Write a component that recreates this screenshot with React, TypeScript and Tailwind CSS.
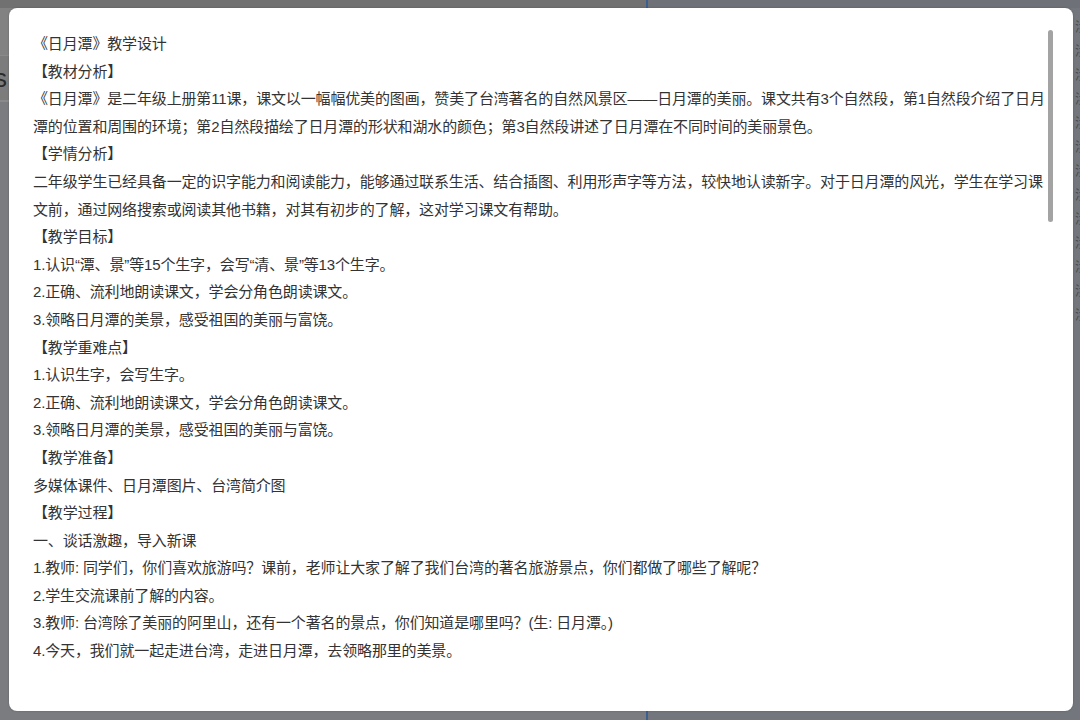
import React from "react";

const lines: string[] = [
  "《日月潭》教学设计",
  "【教材分析】",
  "《日月潭》是二年级上册第11课，课文以一幅幅优美的图画，赞美了台湾著名的自然风景区——日月潭的美丽。课文共有3个自然段，第1自然段介绍了日月潭的位置和周围的环境；第2自然段描绘了日月潭的形状和湖水的颜色；第3自然段讲述了日月潭在不同时间的美丽景色。",
  "【学情分析】",
  "二年级学生已经具备一定的识字能力和阅读能力，能够通过联系生活、结合插图、利用形声字等方法，较快地认读新字。对于日月潭的风光，学生在学习课文前，通过网络搜索或阅读其他书籍，对其有初步的了解，这对学习课文有帮助。",
  "【教学目标】",
  "1.认识“潭、景”等15个生字，会写“清、景”等13个生字。",
  "2.正确、流利地朗读课文，学会分角色朗读课文。",
  "3.领略日月潭的美景，感受祖国的美丽与富饶。",
  "【教学重难点】",
  "1.认识生字，会写生字。",
  "2.正确、流利地朗读课文，学会分角色朗读课文。",
  "3.领略日月潭的美景，感受祖国的美丽与富饶。",
  "【教学准备】",
  "多媒体课件、日月潭图片、台湾简介图",
  "【教学过程】",
  "一、谈话激趣，导入新课",
  "1.教师: 同学们，你们喜欢旅游吗？课前，老师让大家了解了我们台湾的著名旅游景点，你们都做了哪些了解呢？",
  "2.学生交流课前了解的内容。",
  "3.教师: 台湾除了美丽的阿里山，还有一个著名的景点，你们知道是哪里吗？(生: 日月潭。)",
  "4.今天，我们就一起走进台湾，走进日月潭，去领略那里的美景。",
];

const Backdrop = () => (
  <div className="absolute inset-0 flex">
    <div className="w-[646px] bg-[#7e7e7e] flex flex-col">
      <div className="h-[8px] bg-[#717171]" />
      <div className="h-[47px] bg-[#828282]" />
      <div className="h-[45px] bg-[#7c7c7c] border-t border-[#8a8a8a] text-[26px] leading-[45px] text-[#2a2a2a] font-['Liberation_Sans',sans-serif]">
        <span className="-ml-[6px]">s</span>
      </div>
      <div className="h-[2px] bg-[#8a8a8a]" />
      <div className="flex-1 bg-[#7b7c7f]" />
    </div>
    <div className="w-[2px] bg-[#3b5f8f]" />
    <div className="flex-1 bg-[#73777d] flex flex-col">
      <div className="h-[8px] bg-[#6e7278]" />
      <div className="flex-1 flex flex-col items-end pt-[10px] gap-[8px] text-[13px] leading-[16px] text-[#4a4a4a] font-['Noto_Sans_CJK_SC',sans-serif]">
        {Array.from({ length: 13 }).map((_, i) => (
          <span key={i} className="-mr-[8px]">涉</span>
        ))}
      </div>
    </div>
  </div>
);

export default function App() {
  return (
    <div className="relative w-[1080px] h-[720px] overflow-hidden">
      <Backdrop />
      <div className="absolute left-[9px] top-[8px] w-[1064px] h-[703px] bg-white rounded-[8px] shadow-[0_0_2px_rgba(0,0,0,0.25)] overflow-hidden">
        <div className="h-full overflow-hidden pl-[24px] pr-[25px] pt-[22px] text-[15px] leading-[27.6px] tracking-[-0.15px] text-[#333333] font-['Liberation_Sans','Noto_Sans_CJK_SC',sans-serif]">
          {lines.map((t, i) => (
            <p key={i}>{t}</p>
          ))}
        </div>
        <div className="absolute left-[1039px] top-[22px] w-[5px] h-[192px] rounded-full bg-[#a3a3a3]" />
      </div>
    </div>
  );
}
